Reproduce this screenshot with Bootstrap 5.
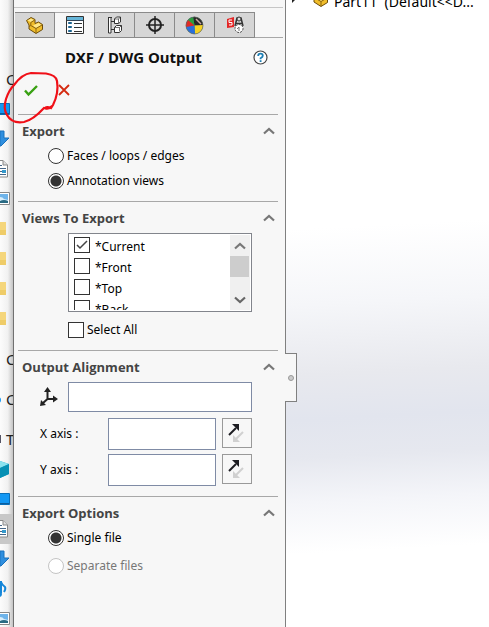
<!DOCTYPE html>
<html lang="en">
<head>
<meta charset="utf-8">
<meta name="viewport" content="width=device-width, initial-scale=1">
<title>DXF / DWG Output</title>
<link href="https://cdn.jsdelivr.net/npm/bootstrap@5.3.0/dist/css/bootstrap.min.css" rel="stylesheet">
<style>
body{font:12px/16px "Noto Sans","Open Sans",sans-serif;color:#000;background:#fff}
.app{min-height:100vh;height:100vh}
svg{display:block;flex:none}
.strip{flex:0 0 13px;background:linear-gradient(90deg,#fcfcfc,#f1f1f1 60%,#c4c4c4);padding-top:64px}
.slot{height:30px;display:flex;align-items:center;overflow:hidden;flex:none}
.slot-gap{margin-top:10px}
.slot-txt{font-size:15px;padding-left:6px;color:#222}
.slot-on{background:#c8c8c8}
.panel{flex:0 0 273px;background:#f7f7f7;border-left:1px solid #707070;border-right:1px solid #808080;z-index:1}
.topline{height:8px;border-bottom:1px solid #c6c6c6;margin-right:2px}
.tabs{margin:4px 2px 0 1px;height:26px;border-bottom:1px solid #a8a8a8}
.tab{width:40px;height:26px;padding:0;background:#d6d6d6;border:1px solid #8a8a8a;border-left:0;display:flex;align-items:center;justify-content:center}
.tab-on{background:#f7f7f7;border-top-color:#aaa;border-bottom-color:#f7f7f7}
.titlebar{height:38px;padding:0 17px 0 51px}
.titlebar h1{font-size:15px;line-height:22px;font-weight:700;color:#111}
.plain{border:0;background:none;padding:0}
.actions{height:38px;padding:0 9px 10px;align-items:center;gap:19px}
.sec{margin:0 7px 0 4px;border-top:1px solid #a8a8a8;padding:4px 0 8px 4px}
.sec-head{height:24px;padding-right:3px}
.sec-head h2{font:700 13px/18px "Open Sans","Noto Sans",sans-serif;color:#444}
.opt{height:25px;margin-left:26px;gap:3px}
.opt+.opt.wide{margin-top:3px}
.rd,.ck{appearance:none;width:16px;height:16px;margin:0;border:1px solid #333;background:#fff;flex:none}
.rd{border-radius:50%}
.rd:checked{background:radial-gradient(circle,#333 0 5px,#fff 6px)}
.rd:disabled{border-color:#c4c4c4}
.off{color:#777}
.ck:checked{background:#fff url("data:image/svg+xml,%3Csvg xmlns='http://www.w3.org/2000/svg' viewBox='0 0 14 14'%3E%3Cpath d='M2 7l3 3 7-7' fill='none' stroke='%23444' stroke-width='1.5'/%3E%3C/svg%3E")}
.list{margin:3px 26px 0 46px;height:79px;border:1px solid #82858c;background:#fff;padding:1px}
.list-rows{overflow:hidden;padding:2px 0 0 4px}
.list-row{height:21px;gap:5px;line-height:19px}
.sbar{width:20px;background:#f0f0f0}
.sbar button{height:21px;display:flex;align-items:center;justify-content:center}
.thumb{height:21px;background:#cdcdcd;margin-right:1px}
.all{height:22px;margin:7px 0 1px 46px;gap:3px}
.axisrow{margin:3px 26px 0 16px}
.inp{border:1px solid #7f8ba5;background:#fff;min-width:0;width:0;flex:1;height:30px}
.pair{margin:6px 26px 0 18px}
.pair+.pair{margin-top:4px}
.pair label{width:68px;line-height:32px}
.pair .inp{height:32px}
.flip{width:30px;height:30px;border:1px solid #999;background:#f7f7f7;padding:0;margin-left:6px;display:flex;align-items:center;justify-content:center}
.align-sec{padding-bottom:10px}
.handle{position:absolute;left:271px;top:353px;width:12px;height:49px;background:#f7f7f7;border:1px solid #808080;border-left:0;display:flex;align-items:center;justify-content:center;padding:0}
.handle span{width:6px;height:6px;border-radius:50%;background:#ccc;border:1px solid #999}
.stage{min-width:0;background:linear-gradient(177deg,#fff 0,#fff 36%,#f5f6f9 48%,#e8e9ee 59%,#e2e5ee 66%,#e6e8ef 72%,#f4f5f9 79%,#fff 87%)}
.tree{padding-left:5px;gap:5px}
.tree-txt{font-size:14px;line-height:16px;margin-top:-6px;white-space:nowrap}
.ring{position:absolute;left:0;top:66px;pointer-events:none;z-index:3}
</style>
<script src="https://cdn.jsdelivr.net/npm/bootstrap@5.3.0/dist/js/bootstrap.bundle.min.js"></script>
</head>
<body>
<svg width="0" height="0" class="position-absolute" aria-hidden="true"><defs>
<g id="up"><path d="M1 6.500 6 2l5 4.500" fill="none" stroke="#777" stroke-width="2.200"/></g>
<g id="fold"><path d="M0 1h6v13H0z" fill="#f5d67b"/><path d="M0 9h6v5H0z" fill="#efcc68"/></g>
<g id="arrow"><path d="M0 1h4v7h5L1 16H0z" fill="#2f8fdf" stroke="#1b72bd"/></g>
<g id="doc"><path d="M-4 .500H3L7.500 5v12h-12z" fill="#fff" stroke="#888"/><path d="M3 .500V5h4.500" fill="#ddd" stroke="#888"/><path d="M0 5.500h2M0 8.500h6M0 11.500h6M0 14.500h6" stroke="#468"/><path d="M2 10h4v3H2z" fill="#39c"/></g>
<g id="pic"><path d="M-4 .500H9.500v12H-4z" fill="#fff" stroke="#888"/><path d="M0 2h8v9H0z" fill="#6fb4ea"/><path d="M0 5q3 0 4 2l4 1v1H0z" fill="#d8eefb"/><path d="M0 9q4-2 8 0v2H0z" fill="#296a83"/></g>
<g id="desk"><path d="M-1 .500H9.500v11H-1z" fill="#1398f4" stroke="#0a6fb8"/><path d="M0 10.500h9" stroke="#0c5e9e"/></g>
<g id="flip"><path d="M2 12 9 5" stroke="#1d1d22" stroke-width="2"/><path d="M5 1h7v7z" fill="#1d1d22"/><path d="M16 9l-7 7" stroke="#d0d0d0" stroke-width="2"/><path d="M6 12v7h7z" fill="#d0d0d0"/></g>
<g id="part"><path d="M1.500 4.500 6 1.500l4 2v4l3.500-1.500 4 2.500v5L11 17.500 4 13V9z" fill="#f0bd2a" stroke="#6d4d0b" stroke-linejoin="round"/><path d="M2.500 4.500 6 2.500l3 1.500-3 2z M8 9.500l5.500-2.500 3 2-5.500 3.200z" fill="#ffe88a"/><path d="M11 12.500V17M5.800 6.500V9.500L11 12.500 17 9M5.800 6.500 9.500 4.200M5.800 9.500 4 10.500" fill="none" stroke="#8a6410"/></g>
</defs></svg>
<div class="app d-flex position-relative overflow-hidden">
<aside class="strip d-flex flex-column overflow-hidden">
<div class="slot slot-txt">C</div>
<div class="slot"><svg width="11" height="13"><use href="#desk"/></svg></div>
<div class="slot"><svg width="11" height="18"><use href="#arrow"/></svg></div>
<div class="slot"><svg width="10" height="18"><use href="#doc"/></svg></div>
<div class="slot"><svg width="11" height="14"><use href="#pic"/></svg></div>
<div class="slot"><svg width="8" height="16"><use href="#fold"/></svg></div>
<div class="slot"><svg width="8" height="16"><use href="#fold"/></svg></div>
<div class="slot"><svg width="8" height="16"><use href="#fold"/></svg></div>
<div class="slot"><svg width="8" height="16"><use href="#fold"/></svg></div>
<div class="slot slot-txt slot-gap">C</div>
<div class="slot slot-gap"><svg width="6" height="8"><circle cx="-2" cy="5" r="3" fill="#1398f4"/></svg><span class="slot-txt ps-0">C</span></div>
<div class="slot slot-gap"><svg width="6" height="10"><path d="M0 1h1v8H0z" fill="#556"/></svg><span class="slot-txt ps-0">T</span></div>
<div class="slot"><svg width="11" height="18"><path d="M0 1l9 3v10l-9 4z" fill="#1ba9c8"/><path d="M0 1l9 3-9 4z" fill="#8be2ef"/><path d="M0 8l9-4v10l-9 4z" fill="#0790b4"/></svg></div>
<div class="slot"><svg width="11" height="13"><use href="#desk"/></svg></div>
<div class="slot slot-on"><svg width="10" height="18"><use href="#doc"/></svg></div>
<div class="slot"><svg width="11" height="18"><use href="#arrow"/></svg></div>
<div class="slot"><svg width="8" height="18"><path d="M1 1v12M1 2q1 3 4 5 1 2-1 5" fill="none" stroke="#1687d9" stroke-width="2"/><circle cx="-1" cy="14" r="3" fill="#1687d9"/></svg></div>
<div class="slot"><svg width="11" height="14"><use href="#pic"/></svg></div>
</aside>
<section class="panel position-relative">
<div class="topline"></div>
<div class="tabs d-flex" role="tablist">
<button class="tab" role="tab" aria-label="Features"><svg width="19" height="19"><use href="#part"/></svg></button>
<button class="tab tab-on" role="tab" aria-selected="true" aria-label="Properties"><svg width="18" height="18"><path d="M.500.500h17v17H.500z" fill="#fff" stroke="#333"/><path d="M1 1h16v3H1z" fill="#65b5d8"/><path d="M1 4.500h16" stroke="#345"/><path d="M2.500 6.500h3v1h-3zM2.500 10.500h3v1h-3zM2.500 14.500h3v1h-3z" fill="#3d9cc6" stroke="#1f628d"/><path d="M8 7.500h8M8 11.500h8M8 15.500h8" stroke="#333"/></svg></button>
<button class="tab" role="tab" aria-label="Configurations"><svg width="16" height="18" fill="#fff" stroke="#333"><path d="M1 1.500h4M1.500 1v16H4v-15M4 5.500h4M4 13.500h4"/><path d="M7.500 3l2-2h4v5l-2 1.500h-4zM7.500 11.500l2-2h5v5l-2 2h-5z"/><path d="M7.500 3h4v4M11.500 3l2-2M7.500 11.500h5v4M12.500 11.500l2-2" fill="none" stroke-width=".700"/></svg></button>
<button class="tab" role="tab" aria-label="Dimensions"><svg width="18" height="18" fill="none" stroke="#222" stroke-width="2"><circle cx="9" cy="9" r="6"/><path d="M9 0v18M0 9h18" stroke-width="1.500"/></svg></button>
<button class="tab" role="tab" aria-label="Appearance"><svg width="19" height="19"><circle cx="9.500" cy="9.500" r="8.500" fill="#32a34b"/><path d="M9.500 9.500 1 10A8.500 8.500 0 0 1 8 1z" fill="#2675df"/><path d="M9.500 9.500 8 1a8.500 8.500 0 0 1 10 9z" fill="#282828"/><path d="M9.500 9.500 18 9a8.500 8.500 0 0 1-8 9z" fill="#f7d224"/><path d="M9.500 9.500 8 1Q3 2 2 6L5 8z" fill="#2da03b"/><path d="M9.500 9.500 1 10a8.500 8.500 0 0 0 9 8z" fill="#2b6fdc"/><path d="M9.500 9.500 3 4a8.500 8.500 0 0 0-2 7z" fill="#e02b24"/><path d="M11 3l5 5" stroke="#c9a9a0" stroke-width="1.500"/><circle cx="9.500" cy="9.500" r="8.500" fill="none" stroke="#666" stroke-width=".700"/></svg></button>
<button class="tab" role="tab" aria-label="Manufacturing"><svg width="18" height="18"><path d="M1 3l7-2v10l-7 1z" fill="#e32626"/><path d="M6 4H3v2.500h3V9H3" fill="none" stroke="#fff"/><path d="M9 10l2-8h4l2 8M10 7.500h6" fill="none" stroke="#333" stroke-width="1.500"/><circle cx="13" cy="3" r="2" fill="#ddd" stroke="#333"/><circle cx="13" cy="12.500" r="4" fill="#fff" stroke="#444" stroke-dasharray="2 1"/><path d="M11 13l2-2v4" fill="none" stroke="#777"/></svg></button>
</div>
<div class="titlebar d-flex align-items-center justify-content-between"><h1 class="m-0 text-nowrap">DXF / DWG Output</h1><button class="plain" aria-label="Help"><svg width="15" height="15"><circle cx="7.500" cy="7.500" r="6.500" fill="#fff" stroke="#444" stroke-width="1.200"/><path d="M5.200 6Q5.200 3.700 7.500 3.700T9.800 5.800Q9.800 7 7.600 8.200V9.300" fill="none" stroke="#1c7fb5" stroke-width="1.800"/><path d="M6.700 10.200h1.800V12H6.700z" fill="#1c7fb5"/></svg></button></div>
<div class="actions d-flex"><button class="plain" aria-label="OK"><svg width="16" height="14"><path d="M2 7.500l3.500 4L14 3" fill="none" stroke="#38a012" stroke-width="2.400"/></svg></button><button class="plain" aria-label="Cancel"><svg width="12" height="12"><path d="M1 1l10 10M11 1 1 11" stroke="#d42a10" stroke-width="1.800"/></svg></button></div>

<div class="sec"><div class="sec-head d-flex align-items-center justify-content-between"><h2 class="m-0">Export</h2><button class="plain" aria-label="Collapse Export"><svg width="12" height="8"><use href="#up"/></svg></button></div>
<div class="opt d-flex align-items-center"><input class="rd" type="radio" name="src" id="r1"><label for="r1">Faces / loops / edges</label></div>
<div class="opt d-flex align-items-center"><input class="rd" type="radio" name="src" id="r2" checked><label for="r2">Annotation views</label></div></div>

<div class="sec"><div class="sec-head d-flex align-items-center justify-content-between"><h2 class="m-0">Views To Export</h2><button class="plain" aria-label="Collapse Views To Export"><svg width="12" height="8"><use href="#up"/></svg></button></div>
<div class="list d-flex"><div class="list-rows flex-grow-1">
<div class="list-row d-flex"><input class="ck" type="checkbox" id="c1" checked><label for="c1">*Current</label></div>
<div class="list-row d-flex"><input class="ck" type="checkbox" id="c2"><label for="c2">*Front</label></div>
<div class="list-row d-flex"><input class="ck" type="checkbox" id="c3"><label for="c3">*Top</label></div>
<div class="list-row d-flex"><input class="ck" type="checkbox" id="c4"><label for="c4">*Back</label></div></div>
<div class="sbar d-flex flex-column"><button class="plain" aria-label="Scroll up"><svg width="12" height="8"><use href="#up"/></svg></button><div class="thumb"></div><button class="plain mt-auto" aria-label="Scroll down"><svg width="12" height="8"><path d="M1 1.500 6 6l5-4.500" fill="none" stroke="#666" stroke-width="2.200"/></svg></button></div></div>
<div class="all d-flex align-items-center"><input class="ck" type="checkbox" id="c5"><label for="c5">Select All</label></div></div>

<div class="sec align-sec"><div class="sec-head d-flex align-items-center justify-content-between"><h2 class="m-0">Output Alignment</h2><button class="plain" aria-label="Collapse Output Alignment"><svg width="12" height="8"><use href="#up"/></svg></button></div>
<div class="axisrow d-flex align-items-center"><svg class="me-2" width="22" height="20"><path d="M9.500 12V4M9.500 12H16M9.500 12 5 16" fill="none" stroke="#222" stroke-width="2"/><path d="M9.500 0 13 5H6zM20 12l-5-3.500v7zM2 19l1-6 5 5z" fill="#222"/></svg><input class="inp" type="text" aria-label="Output alignment"></div>
<div class="pair d-flex"><label for="xa">X axis :</label><input class="inp" type="text" id="xa"><button class="flip" aria-label="Reverse X axis"><svg width="20" height="20"><use href="#flip"/></svg></button></div>
<div class="pair d-flex"><label for="ya">Y axis :</label><input class="inp" type="text" id="ya"><button class="flip" aria-label="Reverse Y axis"><svg width="20" height="20"><use href="#flip"/></svg></button></div></div>

<div class="sec"><div class="sec-head d-flex align-items-center justify-content-between"><h2 class="m-0">Export Options</h2><button class="plain" aria-label="Collapse Export Options"><svg width="12" height="8"><use href="#up"/></svg></button></div>
<div class="opt d-flex align-items-center"><input class="rd" type="radio" name="out" id="o1" checked><label for="o1">Single file</label></div>
<div class="opt wide d-flex align-items-center"><input class="rd" type="radio" name="out" id="o2" disabled><label class="off" for="o2">Separate files</label></div></div>
<button class="handle" aria-label="Collapse panel"><span></span></button>
</section>
<main class="stage flex-grow-1 overflow-hidden"><div class="tree d-flex"><svg width="14" height="6"><path d="M1 0h3L1 3z" fill="#222"/></svg><svg width="19" height="8" viewBox="0 11 19 8"><use href="#part"/></svg><span class="tree-txt">Part11&nbsp; (Default&lt;&lt;D...</span></div></main>
<svg class="ring" width="64" height="62" fill="none" stroke="#f01018" stroke-width="2.200" stroke-linecap="round"><path d="M14 19Q22 8 31 7L46 7.500Q56 9 57 15Q59 27 53 39L51 42Q47 40 45 42Q48 44 52 40Q49 44 44 42Q33 54 24 56Q12 58 7 49Q3 43 6 33Q9 24 14 19"/></svg>
</div>
</body>
</html>
